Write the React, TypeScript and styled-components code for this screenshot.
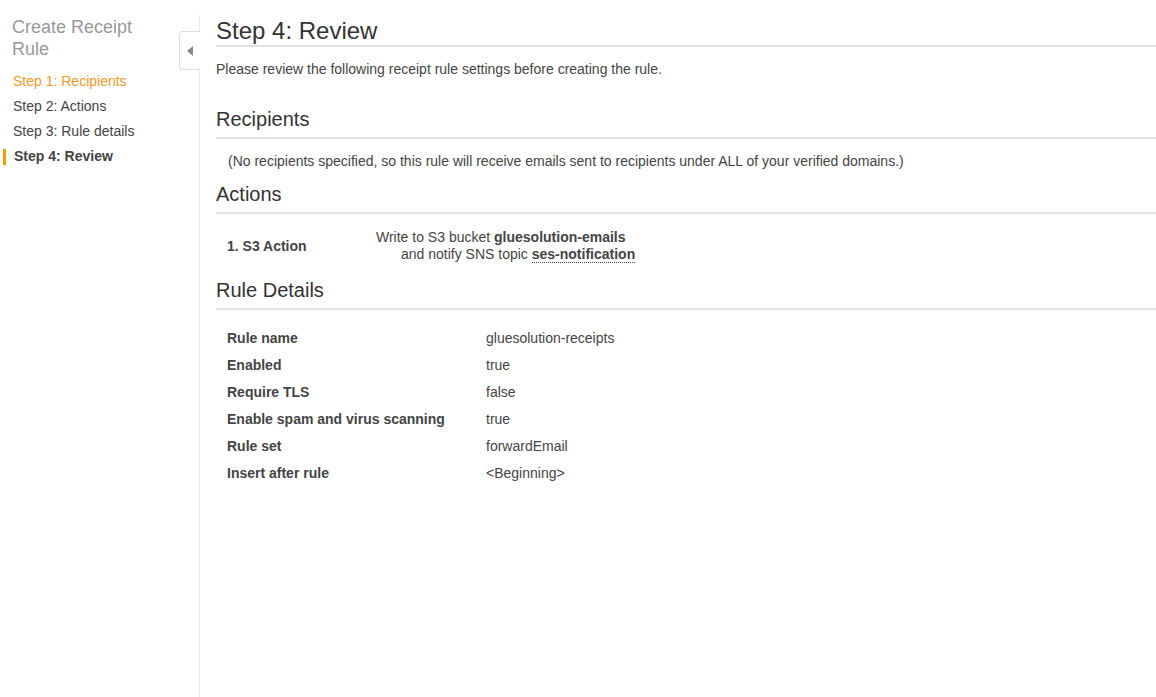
import { Fragment } from 'react'
import styled, { createGlobalStyle } from 'styled-components'

const GlobalStyle = createGlobalStyle`
  body {
    margin: 0;
    background: #fff;
    color: #444;
    font-family: "Liberation Sans", Arial, sans-serif;
    font-size: 14px;
  }
`

const Page = styled.div`
  display: flex;
  height: 697px;
  overflow: hidden;
`

const Sidebar = styled.nav`
  position: relative;
  width: 199px;
  flex: none;
  margin-top: 15px;
  border-right: 1px solid #eaeaea;
`

const SideTitle = styled.h2`
  margin: 1px 0 0;
  padding: 0 40px 0 12px;
  font-size: 18px;
  line-height: 22px;
  font-weight: normal;
  color: #999;
`

const StepList = styled.ul`
  list-style: none;
  margin: 9px 0 0;
  padding: 0;
`

const Step = styled.li<{ state?: 'done' | 'current' }>`
  position: relative;
  padding-left: ${p => (p.state === 'current' ? '14px' : '13px')};
  line-height: 25px;
  color: ${p => (p.state === 'done' ? '#f7981d' : '#444')};
  font-weight: ${p => (p.state === 'current' ? 'bold' : 'normal')};

  &::before {
    content: '';
    display: ${p => (p.state === 'current' ? 'block' : 'none')};
    position: absolute;
    left: 3px;
    top: 5px;
    width: 3px;
    height: 16px;
    background: #f90;
  }
`

const CollapseTab = styled.button`
  position: absolute;
  top: 16px;
  right: -1px;
  width: 21px;
  height: 39px;
  padding: 0;
  border: 1px solid #ddd;
  border-right: none;
  border-radius: 4px 0 0 4px;
  background: #fff;
  display: flex;
  align-items: center;
  justify-content: center;
  cursor: pointer;
`

const Main = styled.main`
  flex: 1;
  padding-left: 16px;
`

const PageTitle = styled.h1`
  margin: 17px 0 0;
  font-size: 24px;
  line-height: 28px;
  font-weight: normal;
  color: #333;
  border-bottom: 2px solid #e1e1e1;
`

const Intro = styled.p`
  margin: 12px 0 0;
  line-height: 20px;
`

const SectionTitle = styled.h2<{ gap: number }>`
  margin: ${p => p.gap}px 0 0;
  padding-bottom: 6px;
  font-size: 20px;
  line-height: 24px;
  font-weight: normal;
  color: #333;
  border-bottom: 2px solid #e1e1e1;
`

const Note = styled.p`
  margin: 12px 0 0;
  padding-left: 12px;
  line-height: 20px;
`

const ActionRow = styled.div`
  display: flex;
  align-items: center;
  margin-top: 15px;
  padding-left: 11px;
  line-height: 17px;
`

const ActionLabel = styled.div`
  width: 149px;
  font-weight: bold;
`

const ActionText = styled.div`
  display: flex;
  flex-direction: column;
`

const ActionLine = styled.span<{ indent?: boolean }>`
  padding-left: ${p => (p.indent ? '25px' : '0')};
`

const Strong = styled.b<{ dotted?: boolean }>`
  border-bottom: ${p => (p.dotted ? '1px dotted #444' : 'none')};
`

const DetailTable = styled.dl`
  display: grid;
  grid-template-columns: 259px 1fr;
  margin: 15px 0 0;
  padding-left: 11px;
  line-height: 27px;
`

const DetailLabel = styled.dt`
  font-weight: bold;
`

const DetailValue = styled.dd`
  margin: 0;
`

const steps = [
  { label: 'Step 1: Recipients', state: 'done' as const },
  { label: 'Step 2: Actions' },
  { label: 'Step 3: Rule details' },
  { label: 'Step 4: Review', state: 'current' as const },
]

const details = [
  ['Rule name', 'gluesolution-receipts'],
  ['Enabled', 'true'],
  ['Require TLS', 'false'],
  ['Enable spam and virus scanning', 'true'],
  ['Rule set', 'forwardEmail'],
  ['Insert after rule', '<Beginning>'],
]

export default function App() {
  return (
    <>
      <GlobalStyle />
      <Page>
        <Sidebar>
          <SideTitle>Create Receipt Rule</SideTitle>
          <StepList>
            {steps.map(s => (
              <Step key={s.label} state={s.state}>{s.label}</Step>
            ))}
          </StepList>
          <CollapseTab aria-label="Collapse">
            <svg width="6" height="10" viewBox="0 0 6 10">
              <path d="M6 0 L0 5 L6 10 Z" fill="#888" />
            </svg>
          </CollapseTab>
        </Sidebar>

        <Main>
          <PageTitle>Step 4: Review</PageTitle>
          <Intro>Please review the following receipt rule settings before creating the rule.</Intro>

          <SectionTitle gap={28}>Recipients</SectionTitle>
          <Note>
            (No recipients specified, so this rule will receive emails sent to recipients under ALL of your verified domains.)
          </Note>

          <SectionTitle gap={11}>Actions</SectionTitle>
          <ActionRow>
            <ActionLabel>1. S3 Action</ActionLabel>
            <ActionText>
              <ActionLine>Write to S3 bucket <Strong>gluesolution-emails</Strong></ActionLine>
              <ActionLine indent>and notify SNS topic <Strong dotted>ses-notification</Strong></ActionLine>
            </ActionText>
          </ActionRow>

          <SectionTitle gap={15}>Rule Details</SectionTitle>
          <DetailTable>
            {details.map(([k, v]) => (
              <Fragment key={k}>
                <DetailLabel>{k}</DetailLabel>
                <DetailValue>{v}</DetailValue>
              </Fragment>
            ))}
          </DetailTable>
        </Main>
      </Page>
    </>
  )
}
